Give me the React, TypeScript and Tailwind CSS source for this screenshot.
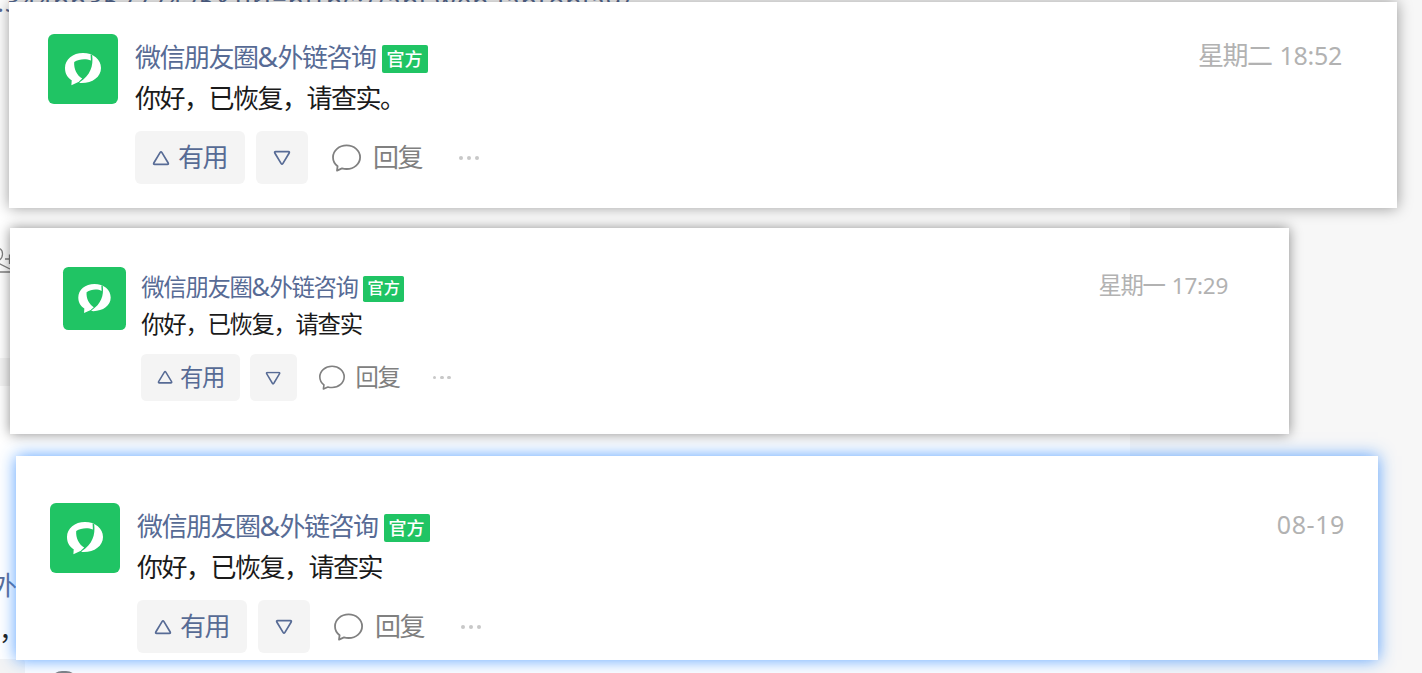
import React from 'react';
import { clsx } from 'clsx';

interface Reply {
  id: number;
  content: string;
  day?: string;
  time: string;
  cardClass: string;
  rowClass: string;
  timeClass: string;
}

const replies: Reply[] = [
  {
    id: 1,
    content: '你好，已恢复，请查实。',
    day: '星期二',
    time: '18:52',
    cardClass: 'ml-[9px] h-[206px] w-[1388px] pt-8 pl-[39px] pr-[55px] shadow-[0_0_14px_rgba(0,0,0,0.4)]',
    rowClass: '',
    timeClass: 'tracking-[-0.3px]',
  },
  {
    id: 2,
    content: '你好，已恢复，请查实',
    day: '星期一',
    time: '17:29',
    cardClass: 'mt-5 ml-[10px] h-[206px] w-[1279px] pt-[38.5px] pl-[53px] pr-[61px] shadow-[0_0_12px_rgba(0,0,0,0.45)]',
    rowClass: '[zoom:0.9]',
    timeClass: 'tracking-[-0.3px]',
  },
  {
    id: 3,
    content: '你好，已恢复，请查实',
    time: '08-19',
    cardClass: 'mt-[22px] ml-4 h-[204px] w-[1362px] pt-[47px] pl-[34px] pr-[33px] shadow-[0_0_16px_rgba(60,145,255,0.85)]',
    rowClass: '',
    timeClass: 'tracking-[0.6px]',
  },
];

const Avatar = () => (
  <div className="flex h-[70px] w-[70px] shrink-0 items-center justify-center rounded-[6px] bg-[#20c464]">
    <svg viewBox="0 0 70 70" className="h-[70px] w-[70px]">
      <path
        fill="#fff"
        d="M35 19 C24.8 19 17 25.2 17 34 C17 39.5 19.5 43.8 23.7 46.2 L23.4 51.2 L31.5 47.4 L31.7 49 C43.5 49.8 53 43.4 53 34 C53 25.2 45.2 19 35 19 Z"
      />
      <path
        fill="#20c464"
        d="M26.2 28 C31 24.8 38 24.2 42.9 26.6 L42.6 20.6 L44.2 21.2 C45.4 32 42.6 41 31.6 48.2 L31 47.6 L34.2 44.6 C29 41.4 25.6 35 26.2 28 Z"
      />
    </svg>
  </div>
);

const Triangle = ({ down = false }: { down?: boolean }) => (
  <svg viewBox="0 0 18 16" className={clsx('h-4 w-[18px] shrink-0', down && 'rotate-180')}>
    <path
      d="M8.2 2.4 L1.8 13 Q1.2 14.3 2.6 14.3 H15.4 Q16.8 14.3 16.2 13 L9.8 2.4 Q9 1.2 8.2 2.4 Z"
      fill="none"
      stroke="#576b95"
      strokeWidth="1.7"
      strokeLinejoin="round"
    />
  </svg>
);

const Bubble = () => (
  <svg viewBox="0 0 30 28" className="h-7 w-[30px] shrink-0">
    <path
      d="M15.6 1.4 C8.1 1.4 2 6.6 2 13.2 C2 16.8 3.7 20 6.6 22.2 L6 26.6 L11 24.4 C12.4 24.8 14 25 15.6 25 C23.1 25 29.1 19.8 29.1 13.2 C29.1 6.6 23.1 1.4 15.6 1.4 Z"
      fill="none"
      stroke="#808080"
      strokeWidth="1.8"
      strokeLinejoin="round"
    />
  </svg>
);

const Dots = () => (
  <div className="ml-[37px] flex gap-1">
    <span className="h-1 w-1 rounded-full bg-[#c8c8c8]" />
    <span className="h-1 w-1 rounded-full bg-[#c8c8c8]" />
    <span className="h-1 w-1 rounded-full bg-[#c8c8c8]" />
  </div>
);

const ReplyCard = ({ reply }: { reply: Reply }) => (
  <section className={clsx('bg-white', reply.cardClass)}>
    <div className={clsx('flex', reply.rowClass)}>
      <Avatar />
      <div className="ml-[17px] flex-1 text-[26px] leading-[41px] tracking-[-1.5px] whitespace-nowrap">
        <div className="mt-[3px] flex h-[41px] items-center">
          <span className="text-[#576b95]">
            微信朋友圈<span className="text-[28px] leading-none">&amp;</span>
            <span className="ml-px">外链咨询</span>
          </span>
          <span className="mt-[3px] ml-1.5 h-7 w-[46px] rounded-[2px] bg-[#20c464] text-center text-[18px] leading-7 font-medium tracking-normal text-white">
            官方
          </span>
        </div>
        <div className="h-[41px] text-[#1a1a1a]">{reply.content}</div>
        <div className="mt-3 flex h-[53px] items-center">
          <button className="flex h-[53px] w-[110px] items-center rounded-[6px] bg-[#f4f4f4] pl-[17px] text-[#576b95]">
            <Triangle />
            <span className="ml-2">有用</span>
          </button>
          <button className="ml-[11px] flex h-[53px] w-[52px] items-center justify-center rounded-[6px] bg-[#f4f4f4] pt-px pr-px">
            <Triangle down />
          </button>
          <div className="ml-[23px] flex items-center text-[#808080]">
            <Bubble />
            <span className="ml-3">回复</span>
            <Dots />
          </div>
        </div>
      </div>
      <div className="mt-px flex h-[41px] items-center gap-2 text-[26px] whitespace-nowrap text-[#b2b2b2]">
        {reply.day && <span className="tracking-[-1.5px]">{reply.day}</span>}
        <span className={clsx('text-[25px]', reply.timeClass)}>{reply.time}</span>
      </div>
    </div>
  </section>
);

// page that shows through around the cards
const Backdrop = () => (
  <div className="absolute inset-0 overflow-hidden bg-[#f7f7f7] text-[26px] whitespace-nowrap text-[#576b95]">
    <div className="h-full w-[1130px] bg-white" />
    <span className="absolute top-[-16px] left-[-3px] leading-9 tracking-[1.1px]">.344bb35277425&amp;uri=https://api.web.laptopia9/</span>
    <svg viewBox="0 0 16 30" className="absolute top-[246px] left-0 h-[30px] w-4" fill="none" stroke="#808080" strokeWidth="1.3">
      <path d="M-2 2 C4 3 4 12 -2 15 M-1 17.5 L10 23 M5 13 H14 M9.5 8.5 V18 M0 26 H14" />
    </svg>
    <div className="absolute top-[358px] left-0 h-7 w-4 bg-[#f4f4f4]" />
    <span className="absolute top-[565px] left-[-9px] leading-10">外</span>
    <span className="absolute top-[610px] left-[-1px] leading-10 text-[#1a1a1a]">，</span>
    <div className="absolute top-[659px] left-[-10px] h-10 w-[35px] rounded-[4px] bg-[#f4f4f4]" />
    <div className="absolute top-[671px] left-[50px] h-6 w-7 rounded-full border-2 border-[#808080]" />
  </div>
);

const App: React.FC = () => {
  return (
    <div className="relative h-[673px] w-[1422px] overflow-hidden font-['Noto_Sans','Noto_Sans_CJK_SC',sans-serif]">
      <Backdrop />
      <main className="relative pt-[2px]">
        {replies.map((reply) => (
          <ReplyCard key={reply.id} reply={reply} />
        ))}
      </main>
    </div>
  );
};

export default App;
